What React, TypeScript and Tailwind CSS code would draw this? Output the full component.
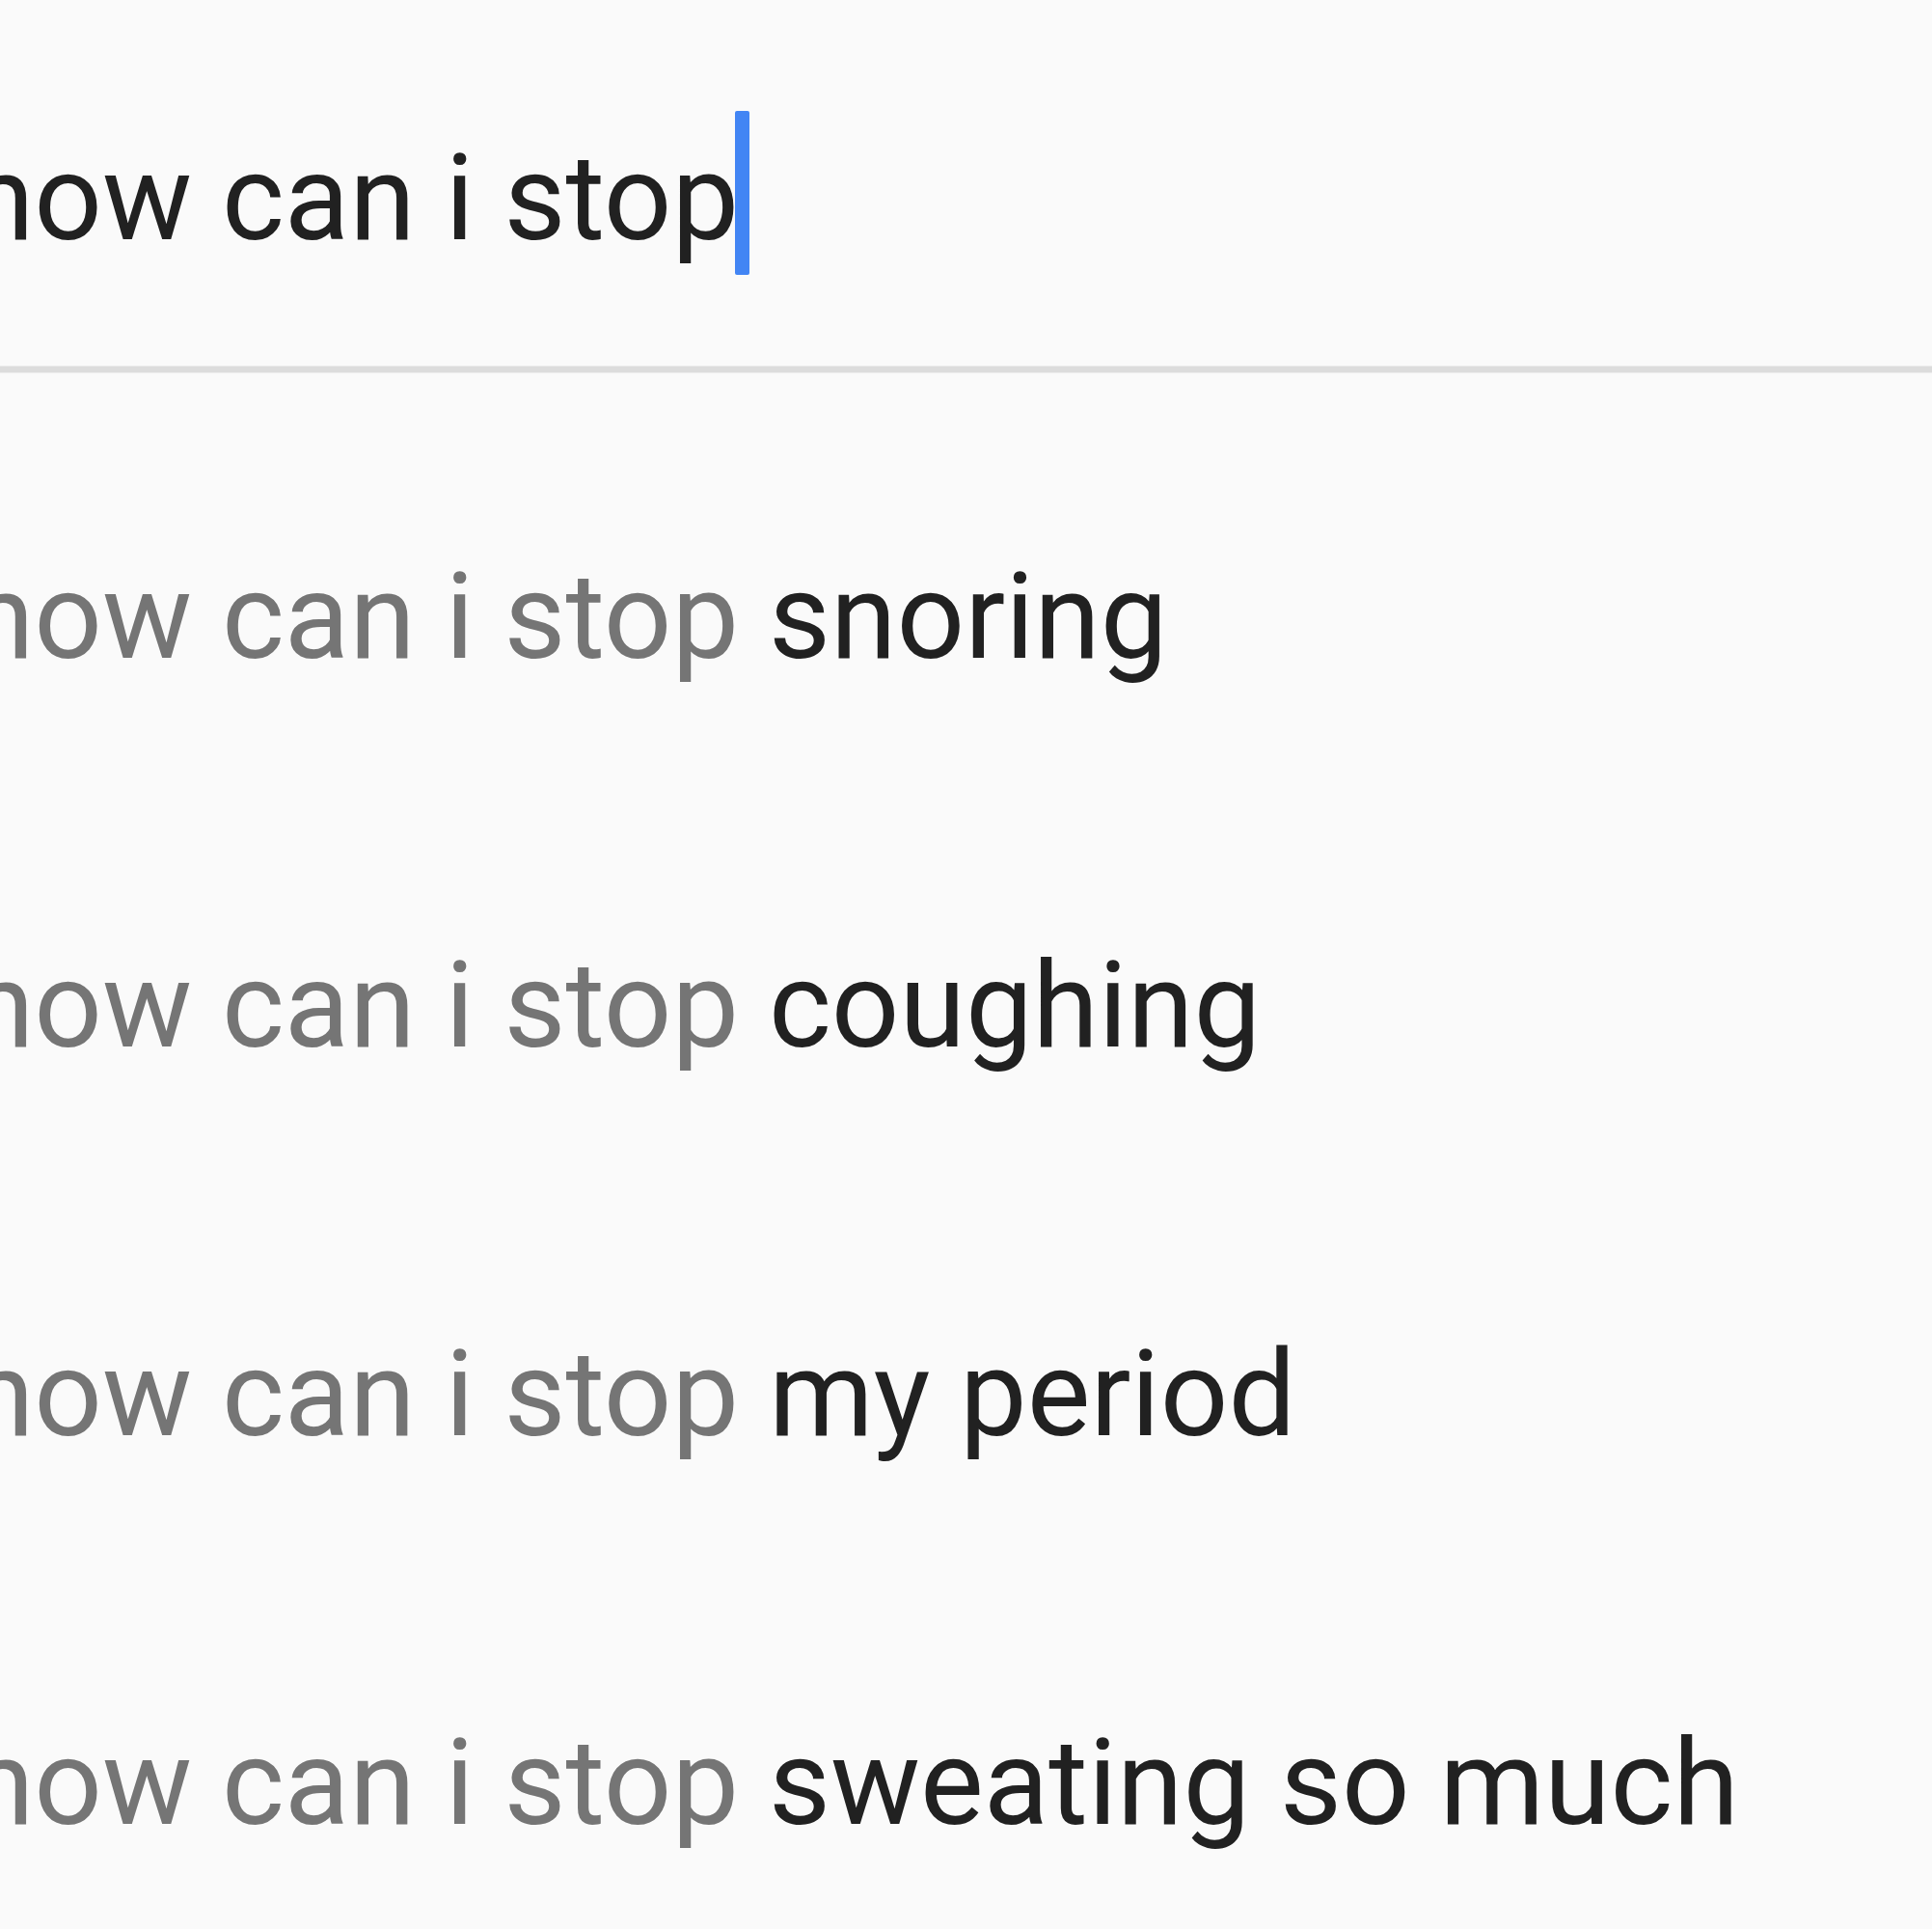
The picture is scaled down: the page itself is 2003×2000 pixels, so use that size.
const suggestions = ['snoring', 'coughing', 'my period', 'sweating so much'];

const App = () => {
  const query = 'how can i stop';

  return (
    <div className="min-h-[2000px] w-full overflow-hidden bg-[#fafafa] font-['Roboto',sans-serif] text-[124px]">
      <div className="h-[379px] pt-[144px]">
        <div className="-ml-[33px] whitespace-nowrap leading-none text-[#212121]">
          <span className="relative">
            {query}
            <span className="absolute left-full top-[-18px] -ml-[4px] h-[170px] w-[15px] rounded-[2px] bg-[#4285f4]" />
          </span>
        </div>
      </div>

      <div className="h-[8px] border-y border-[#ececec] bg-[#dcdcdc]" />

      <ul className="pt-[51px]">
        {suggestions.map((item) => (
          <li key={item} className="-ml-[33px] whitespace-nowrap leading-[403px]">
            <span className="text-[#757575]">{query} </span>
            <span className="text-[#212121]">{item}</span>
          </li>
        ))}
      </ul>
    </div>
  );
};

export default App;
